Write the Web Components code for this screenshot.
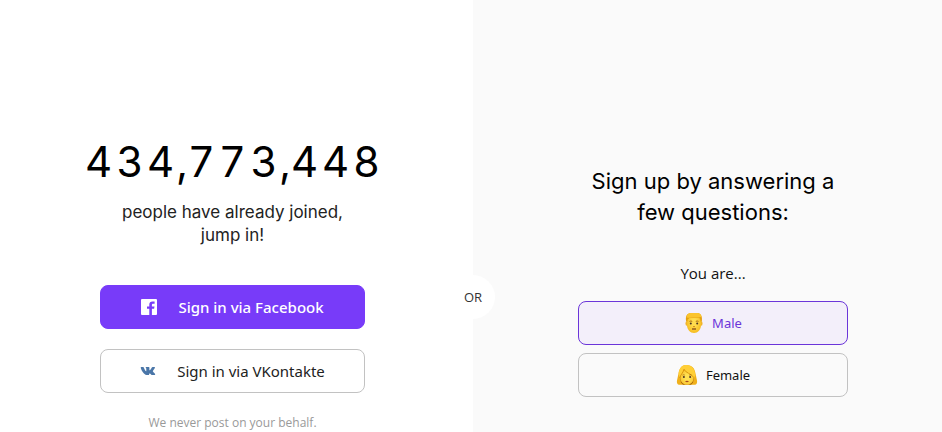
<!DOCTYPE html>
<html lang="en">
<head>
<meta charset="utf-8">
<meta name="viewport" content="width=device-width, initial-scale=1">
<title>Sign up</title>
<style>
html, body { margin: 0; height: 100%; overflow: hidden; }
body { font-family: "Open Sans", "Noto Sans", sans-serif; color: #111; background: #fff; }
</style>
</head>
<body>
<signup-page></signup-page>

<template id="t-page">
<style>
:host { display: grid; grid-template-columns: 473fr 469fr; min-height: 100vh; position: relative; }
section { box-sizing: border-box; display: flex; flex-direction: column; align-items: center; text-align: center; }
.left { padding: 136px 8px 0 0; background: #fff; }
.right { padding: 166px 0 0 11px; background: #fafafa; }
p, h1 { margin: 0; font-weight: 400; }
.lead { width: 240px; margin-top: 13px; font: 17px/23px Inter, sans-serif; color: #222; }
.social { display: flex; flex-direction: column; gap: 20px; width: 265px; margin-top: 38px; }
.note { margin-top: 22px; font-size: 12px; line-height: 16px; color: #999; }
h1 { width: 270px; font: 22px/31px Inter, sans-serif; color: #000; }
fieldset { display: flex; flex-direction: column; gap: 8px; width: 270px; margin: 33px 0 0; padding: 0; border: 0; }
legend { padding: 0; margin: 0 auto 16px; font-size: 15px; line-height: 24px; }
or-badge { position: absolute; left: calc(473 / 942 * 100%); top: 275px; transform: translateX(-50%); }
</style>
<section class="left">
  <people-counter value="434,773,448"></people-counter>
  <p class="lead">people have already joined, jump in!</p>
  <div class="social">
    <social-button kind="facebook">
      <svg slot="icon" width="16" height="16" viewBox="0 0 16 16"><rect width="16" height="16" rx="1" fill="#fff"/><path fill="#783bf9" d="M8.300 16V9.800H6V7.400h2.300V5.600c0-2 1.200-3.200 3.100-3.200h2.200v2.300h-1.500c-.8 0-1.200.4-1.200 1.100v1.600h2.600l-.4 2.400h-2.200V16Z"/></svg>
      Sign in via Facebook
    </social-button>
    <social-button kind="vk">
      <svg slot="icon" width="16" height="16" viewBox="0 0 16 16"><path fill="#4a76a8" d="M7.700 12h.9c.3 0 .5-.3.5-.6 0-1 .5-1.300 1.200-.6.800.8 1.100 1.200 2 1.200h1.900c.9 0 1.300-.5.700-1.300-.6-.8-1.900-1.900-2-2.200-.1-.3 0-.5.3-.9.600-.8 1.600-2.100 1.800-3 .1-.4-.1-.6-.6-.6h-1.800c-.4 0-.6.2-.8.600-.4 1-1.300 2.400-1.900 2.700-.3.100-.5-.1-.5-.6V4.600c0-.4-.2-.6-.6-.6H6c-.4 0-.5.300-.3.600.5.600.6.700.6 1.700v1.600c-.1.600-.7.200-1.200-.6-.5-.8-.9-1.700-1.200-2.600-.1-.4-.3-.7-.8-.7H1.300c-.5 0-.7.300-.6.700.5 1.800 1.700 4.100 3 5.500C4.800 11.500 6.100 12 7.700 12Z"/></svg>
      Sign in via VKontakte
    </social-button>
  </div>
  <p class="note">We never post on your behalf.</p>
</section>
<section class="right">
  <h1>Sign up by answering a few questions:</h1>
  <fieldset>
    <legend>You are...</legend>
    <gender-option value="male" selected>
      <svg slot="icon" width="20" height="22" viewBox="0 0 20 22">
        <defs><radialGradient id="mf" cx=".5" cy=".45" r=".6"><stop offset=".3" stop-color="#ffdc4e"/><stop offset="1" stop-color="#f5b81b"/></radialGradient></defs>
        <ellipse cx="2.700" cy="11.500" rx="1.200" ry="2.200" fill="#f0b32a"/><ellipse cx="17.300" cy="11.500" rx="1.200" ry="2.200" fill="#f0b32a"/>
        <path fill="url(#mf)" d="M3 6Q3 2 10 2t7 4v7c0 4.500-3.300 8-7 8s-7-3.500-7-8Z"/>
        <path fill="#e3a010" d="M2.200 9.500C1.200 5 2.500 1 7 1h6.500c4 .5 5 4.500 4.300 8.500l-1 .3-.8-3-1-1-9.500.3-1.700 1.200-.6 2.500Z"/>
        <path fill="#fbc42c" d="M2.500 5.500C3 2 5 1 7 1h7c2.200.4 3.300 1.900 3.600 4C13 5.300 7 6 2.500 5.500Z"/>
        <path stroke="#9b5d12" stroke-width=".9" fill="none" d="M5.500 9.400q1.400-.8 2.700 0m3.600 0q1.300-.8 2.700 0"/>
        <circle cx="6.800" cy="11.600" r="1" fill="#493225"/><circle cx="13.200" cy="11.600" r="1" fill="#493225"/>
        <path stroke="#d88d14" fill="none" d="M9 14.600h2"/><path stroke="#7b401b" stroke-width="1.200" fill="none" d="M8 17h4"/>
      </svg>
      Male
    </gender-option>
    <gender-option value="female">
      <svg slot="icon" width="22" height="22" viewBox="0 0 22 22">
        <defs><radialGradient id="ff" cx=".5" cy=".5" r=".6"><stop offset=".3" stop-color="#ffe052"/><stop offset="1" stop-color="#f8c02a"/></radialGradient></defs>
        <path fill="#f0b01a" d="M9.500 1C5 1.300 3 5.500 2.400 10L1 16.500c-.4 2 .2 4 1.800 4.300h16.400c1.600-.3 2.200-2.300 1.800-4.300l-1.400-6.500C19 4.500 16 .6 9.500 1Z"/>
        <path fill="#a86608" d="M4 14l1 4.500 2 2.300h8l2-2.300 1-4.500Z"/>
        <path fill="url(#ff)" d="M4.300 11.500C5.500 10 7 8.500 8 6c2.500 2.500 7 3.500 9.700 6.500v1c0 4.200-3 7.300-6.700 7.300s-6.700-3.100-6.700-7.300Z"/>
        <path fill="#ffcf36" d="M8 5.500c2 3.500 7 4 10 8.200l1.300-2.200C18.800 5 16 .6 9.500 1 5.500 1.400 3.400 4.500 2.700 9.500l.8 3.700C4.500 11 7 9 8 5.500Z"/>
        <path stroke="#d28b09" stroke-width=".8" fill="none" d="M7.700 5c2 4 7.300 4.500 10.200 8.500M8 5.500C7 9 4.500 10.500 3.900 14"/>
        <path stroke="#9b5d12" fill="none" stroke-width=".7" d="M6.500 11.100q1.100-.6 2.300 0m4.400 0q1.200-.6 2.300 0"/>
        <circle cx="7.900" cy="13" r="1" fill="#493225"/><circle cx="14.100" cy="13" r="1" fill="#493225"/>
        <path fill="#a8481c" d="M9 17.300q2-1 4 0-2 1.700-4 0Z"/>
      </svg>
      Female
    </gender-option>
  </fieldset>
</section>
<or-badge>OR</or-badge>
</template>

<template id="t-counter">
<style>
:host { display: flex; font: 42px/52px Inter, sans-serif; color: #000; }
span { width: 31px; text-align: center; }
.sep { width: 10px; }
</style>
</template>

<template id="t-social">
<style>
:host { display: block; }
button { box-sizing: border-box; width: 100%; height: 44px; display: flex; align-items: center; justify-content: center; gap: 21px; padding: 0; border: 1px solid #c2c2c2; border-radius: 8px; background: #fff; color: #222; font: 400 15px/24px "Noto Sans", sans-serif; cursor: pointer; }
:host([kind="facebook"]) button { background: #783bf9; border-color: #783bf9; color: #fff; font-weight: 500; }
::slotted(svg) { display: block; }
</style>
<button type="button"><slot name="icon"></slot><span><slot></slot></span></button>
</template>

<template id="t-gender">
<style>
:host { display: block; }
button { box-sizing: border-box; width: 100%; height: 44px; display: flex; align-items: center; justify-content: center; gap: 8px; padding: 0; border: 1px solid #c2c2c2; border-radius: 8px; background: transparent; color: #111; font: 400 13px/20px "Noto Sans", sans-serif; cursor: pointer; }
:host([selected]) button { background: #f3effa; border-color: #6b35d9; color: #6b35d9; }
::slotted(svg) { display: block; }
</style>
<button type="button"><slot name="icon"></slot><span><slot></slot></span></button>
</template>

<template id="t-or">
<style>
:host { display: grid; place-items: center; width: 44px; height: 44px; border-radius: 50%; background: #fff; color: #333; font-size: 13px; line-height: 20px; }
</style>
<slot></slot>
</template>

<script>
class Base extends HTMLElement {
  constructor() {
    super();
    this.attachShadow({ mode: "open" }).append(
      document.getElementById(this.constructor.tpl).content.cloneNode(true));
  }
}
class OrBadge extends Base { static tpl = "t-or"; }
class SocialButton extends Base { static tpl = "t-social"; }
class PeopleCounter extends Base {
  static tpl = "t-counter";
  connectedCallback() {
    for (const ch of this.getAttribute("value")) {
      const cell = document.createElement("span");
      cell.textContent = ch;
      if (ch === ",") cell.className = "sep";
      this.shadowRoot.append(cell);
    }
  }
}
class GenderOption extends Base {
  static tpl = "t-gender";
  static observedAttributes = ["selected"];
  connectedCallback() {
    this.sync();
    this.shadowRoot.querySelector("button").onclick = () => {
      for (const o of this.parentNode.querySelectorAll("gender-option")) o.toggleAttribute("selected", o === this);
    };
  }
  attributeChangedCallback() { this.sync(); }
  sync() { this.shadowRoot.querySelector("button").setAttribute("aria-pressed", this.hasAttribute("selected")); }
}
class SignupPage extends Base { static tpl = "t-page"; }
customElements.define("or-badge", OrBadge);
customElements.define("social-button", SocialButton);
customElements.define("people-counter", PeopleCounter);
customElements.define("gender-option", GenderOption);
customElements.define("signup-page", SignupPage);
</script>
</body>
</html>
